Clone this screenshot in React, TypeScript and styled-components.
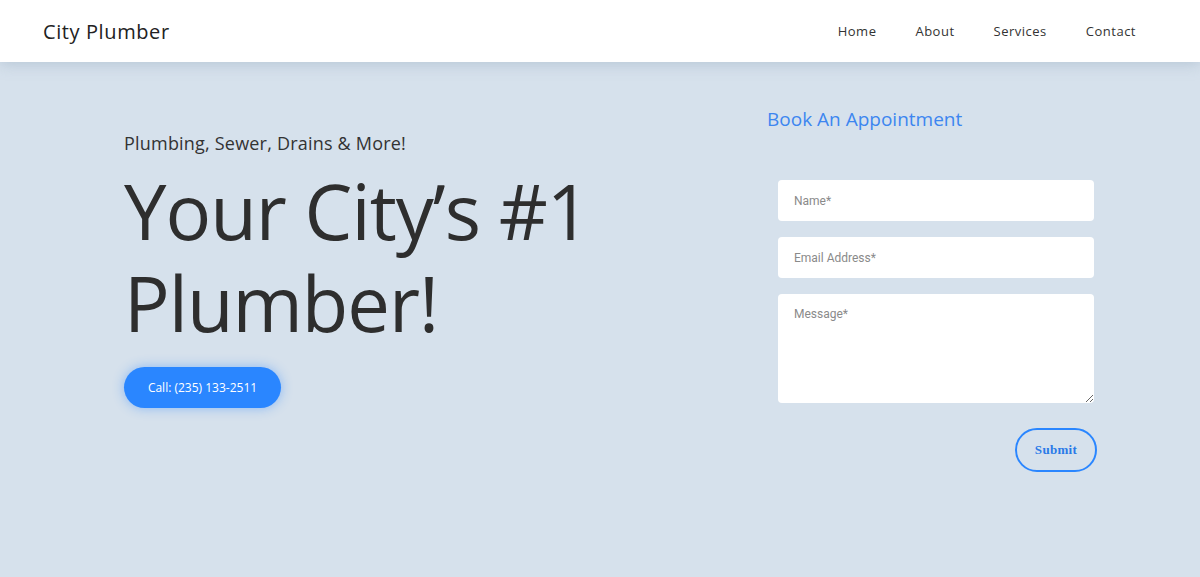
import React from "react";
import styled, { createGlobalStyle } from "styled-components";

const GlobalStyle = createGlobalStyle`
	* {
		box-sizing: border-box;
	}
	body {
		margin: 0;
		background: #d6e1ec;
		font-family: "Open Sans", "DejaVu Sans", sans-serif;
		color: #333;
	}
`;

const Header = styled.header`
	height: 62px;
	background: #fff;
	display: flex;
	align-items: center;
	justify-content: space-between;
	padding: 0 64px 0 43px;
	box-shadow: 0 2px 14px rgba(120, 145, 170, 0.35);
	position: relative;
	z-index: 1;
`;

const Logo = styled.div`
	font-size: 20px;
	font-weight: 500;
	color: #222;
	letter-spacing: 0.6px;
`;

const Nav = styled.nav`
	display: flex;
	gap: 39px;
`;

const NavLink = styled.a`
	font-size: 13px;
	font-weight: 500;
	color: #333;
	text-decoration: none;
	letter-spacing: 0.5px;
`;

const Hero = styled.main`
	min-height: 515px;
	display: flex;
	padding: 44px 103px 0 124px;
`;

const Intro = styled.section`
	flex: 1;
	padding-top: 25px;
`;

const Tagline = styled.p`
	margin: 0;
	font-size: 18px;
	font-weight: 400;
	color: #333;
	letter-spacing: 0.2px;
`;

const Headline = styled.h1`
	margin: 10px 0 18px;
	font-size: 76px;
	font-weight: 400;
	color: #2e2e2e;
	letter-spacing: -1px;
`;

const HeadlineLine = styled.span`
	display: block;
	line-height: 92px;
	height: 92px;
`;

const CallButton = styled.a`
	display: inline-flex;
	align-items: center;
	justify-content: center;
	width: 157px;
	height: 41px;
	border-radius: 21px;
	background: #2a86ff;
	color: #fff;
	font-size: 12px;
	text-decoration: none;
	box-shadow: 0 0 12px rgba(42, 134, 255, 0.45);
`;

const Booking = styled.aside`
	width: 330px;
`;

const BookTitle = styled.h2`
	margin: 0 0 48px;
	font-size: 19px;
	font-weight: 400;
	color: #3d86f0;
`;

const Form = styled.form`
	display: flex;
	flex-direction: column;
	gap: 16px;
	padding-left: 11px;
	align-items: stretch;
`;

const Field = styled.input`
	width: 316px;
	height: 41px;
	border: none;
	border-radius: 4px;
	background: #fff;
	padding: 0 16px;
	font-family: Roboto, sans-serif;
	font-size: 12px;
	outline: none;
	&::placeholder {
		color: #8a8a8a;
	}
`;

const MessageField = styled.textarea`
	width: 316px;
	height: 109px;
	border: none;
	border-radius: 4px;
	background: #fff;
	padding: 13px 16px;
	font-family: Roboto, sans-serif;
	font-size: 12px;
	outline: none;
	&::placeholder {
		color: #8a8a8a;
	}
`;

const SubmitRow = styled.div`
	display: flex;
	justify-content: flex-end;
	margin-top: 9px;
`;

const SubmitButton = styled.button`
	width: 82px;
	height: 44px;
	border-radius: 22px;
	border: 2px solid #2a86ff;
	background: transparent;
	color: #2a7ae8;
	font-family: "Liberation Serif", serif;
	font-weight: 700;
	font-size: 13px;
	letter-spacing: 0.3px;
`;

const App = () => {
	return (
		<>
			<GlobalStyle />
			<Header>
				<Logo>City Plumber</Logo>
				<Nav>
					<NavLink href="#">Home</NavLink>
					<NavLink href="#">About</NavLink>
					<NavLink href="#">Services</NavLink>
					<NavLink href="#">Contact</NavLink>
				</Nav>
			</Header>
			<Hero>
				<Intro>
					<Tagline>Plumbing, Sewer, Drains &amp; More!</Tagline>
					<Headline>
						<HeadlineLine>Your City’s #1</HeadlineLine>
						<HeadlineLine>Plumber!</HeadlineLine>
					</Headline>
					<CallButton href="#">Call: (235) 133-2511</CallButton>
				</Intro>
				<Booking>
					<BookTitle>Book An Appointment</BookTitle>
					<Form onSubmit={(e) => e.preventDefault()}>
						<Field placeholder="Name*" />
						<Field placeholder="Email Address*" />
						<MessageField placeholder="Message*" />
						<SubmitRow>
							<SubmitButton type="submit">Submit</SubmitButton>
						</SubmitRow>
					</Form>
				</Booking>
			</Hero>
		</>
	);
};

export default App;
